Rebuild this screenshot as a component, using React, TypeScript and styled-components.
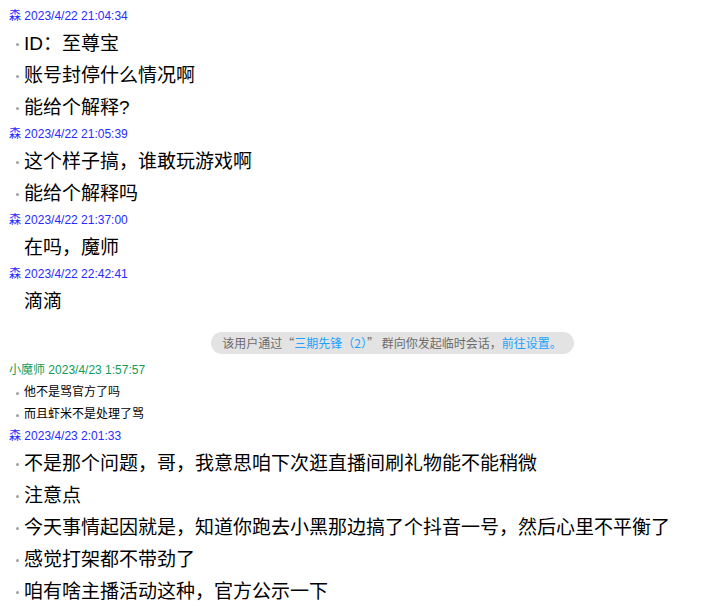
import React from "react";
import styled, { createGlobalStyle } from "styled-components";

const GlobalStyle = createGlobalStyle`
  html, body {
    margin: 0;
    padding: 0;
    background: #ffffff;
  }
  body {
    font-family: "Liberation Sans", "Noto Sans CJK SC", sans-serif;
    color: #000;
  }
`;

const Page = styled.div`
  padding: 5px 0 0 9px;
  display: flex;
  flex-direction: column;
`;

const Group = styled.section`
  display: flex;
  flex-direction: column;
`;

const Header = styled.div<{ $tone: "blue" | "green" }>`
  font-size: 12px;
  line-height: 22px;
  height: 22px;
  color: ${(p) => (p.$tone === "green" ? "#129a57" : "#2a2aff")};
  white-space: nowrap;
`;

const MessageList = styled.ul`
  list-style: none;
  margin: 0;
  padding: 0 0 0 15px;
  display: flex;
  flex-direction: column;
`;

const Message = styled.li<{ $size: "big" | "small"; $bullet: boolean }>`
  position: relative;
  box-sizing: border-box;
  font-size: ${(p) => (p.$size === "big" ? "19px" : "12px")};
  padding-top: ${(p) => (p.$size === "big" ? "2px" : "0")};
  line-height: ${(p) => (p.$size === "big" ? "30px" : "22px")};
  height: ${(p) => (p.$size === "big" ? "32px" : "22px")};
  white-space: nowrap;
  &::before {
    content: "";
    display: ${(p) => (p.$bullet ? "block" : "none")};
    position: absolute;
    left: -8px;
    top: 50%;
    width: 3px;
    height: 3px;
    margin-top: 0;
    border-radius: 50%;
    background: #a0a0a0;
  }
`;

const NoticeRow = styled.div`
  display: flex;
  justify-content: center;
  padding: 15px 0 5px 55px;
`;

const Notice = styled.div`
  height: 22px;
  line-height: 22px;
  padding: 0 12px 0 11px;
  border-radius: 11px;
  background: #e3e3e3;
  font-family: "Noto Sans CJK SC", "Liberation Sans", sans-serif;
  font-size: 12px;
  color: #6b6b6b;
  white-space: nowrap;
`;

const Link = styled.span`
  color: #1aa3ff;
`;

type GroupData = {
  name: string;
  time: string;
  tone: "blue" | "green";
  size: "big" | "small";
  bullet: boolean;
  msgs: string[];
};

const before: GroupData[] = [
  {
    name: "森",
    time: "2023/4/22 21:04:34",
    tone: "blue",
    size: "big",
    bullet: true,
    msgs: ["ID：至尊宝", "账号封停什么情况啊", "能给个解释?"],
  },
  {
    name: "森",
    time: "2023/4/22 21:05:39",
    tone: "blue",
    size: "big",
    bullet: true,
    msgs: ["这个样子搞，谁敢玩游戏啊", "能给个解释吗"],
  },
  {
    name: "森",
    time: "2023/4/22 21:37:00",
    tone: "blue",
    size: "big",
    bullet: false,
    msgs: ["在吗，魔师"],
  },
  {
    name: "森",
    time: "2023/4/22 22:42:41",
    tone: "blue",
    size: "big",
    bullet: false,
    msgs: ["滴滴"],
  },
];

const after: GroupData[] = [
  {
    name: "小魔师",
    time: "2023/4/23 1:57:57",
    tone: "green",
    size: "small",
    bullet: true,
    msgs: ["他不是骂官方了吗", "而且虾米不是处理了骂"],
  },
  {
    name: "森",
    time: "2023/4/23 2:01:33",
    tone: "blue",
    size: "big",
    bullet: true,
    msgs: [
      "不是那个问题，哥，我意思咱下次逛直播间刷礼物能不能稍微",
      "注意点",
      "今天事情起因就是，知道你跑去小黑那边搞了个抖音一号，然后心里不平衡了",
      "感觉打架都不带劲了",
      "咱有啥主播活动这种，官方公示一下",
    ],
  },
];

const ChatGroup = ({ g }: { g: GroupData }) => (
  <Group>
    <Header $tone={g.tone}>
      {g.name} {g.time}
    </Header>
    <MessageList>
      {g.msgs.map((m, i) => (
        <Message key={i} $size={g.size} $bullet={g.bullet}>
          {m}
        </Message>
      ))}
    </MessageList>
  </Group>
);

export default function App() {
  return (
    <>
      <GlobalStyle />
      <Page>
        {before.map((g, i) => (
          <ChatGroup key={`b${i}`} g={g} />
        ))}
        <NoticeRow>
          <Notice>
            该用户通过“<Link>三期先锋（2）</Link>” 群向你发起临时会话，
            <Link>前往设置。</Link>
          </Notice>
        </NoticeRow>
        {after.map((g, i) => (
          <ChatGroup key={`a${i}`} g={g} />
        ))}
      </Page>
    </>
  );
}
